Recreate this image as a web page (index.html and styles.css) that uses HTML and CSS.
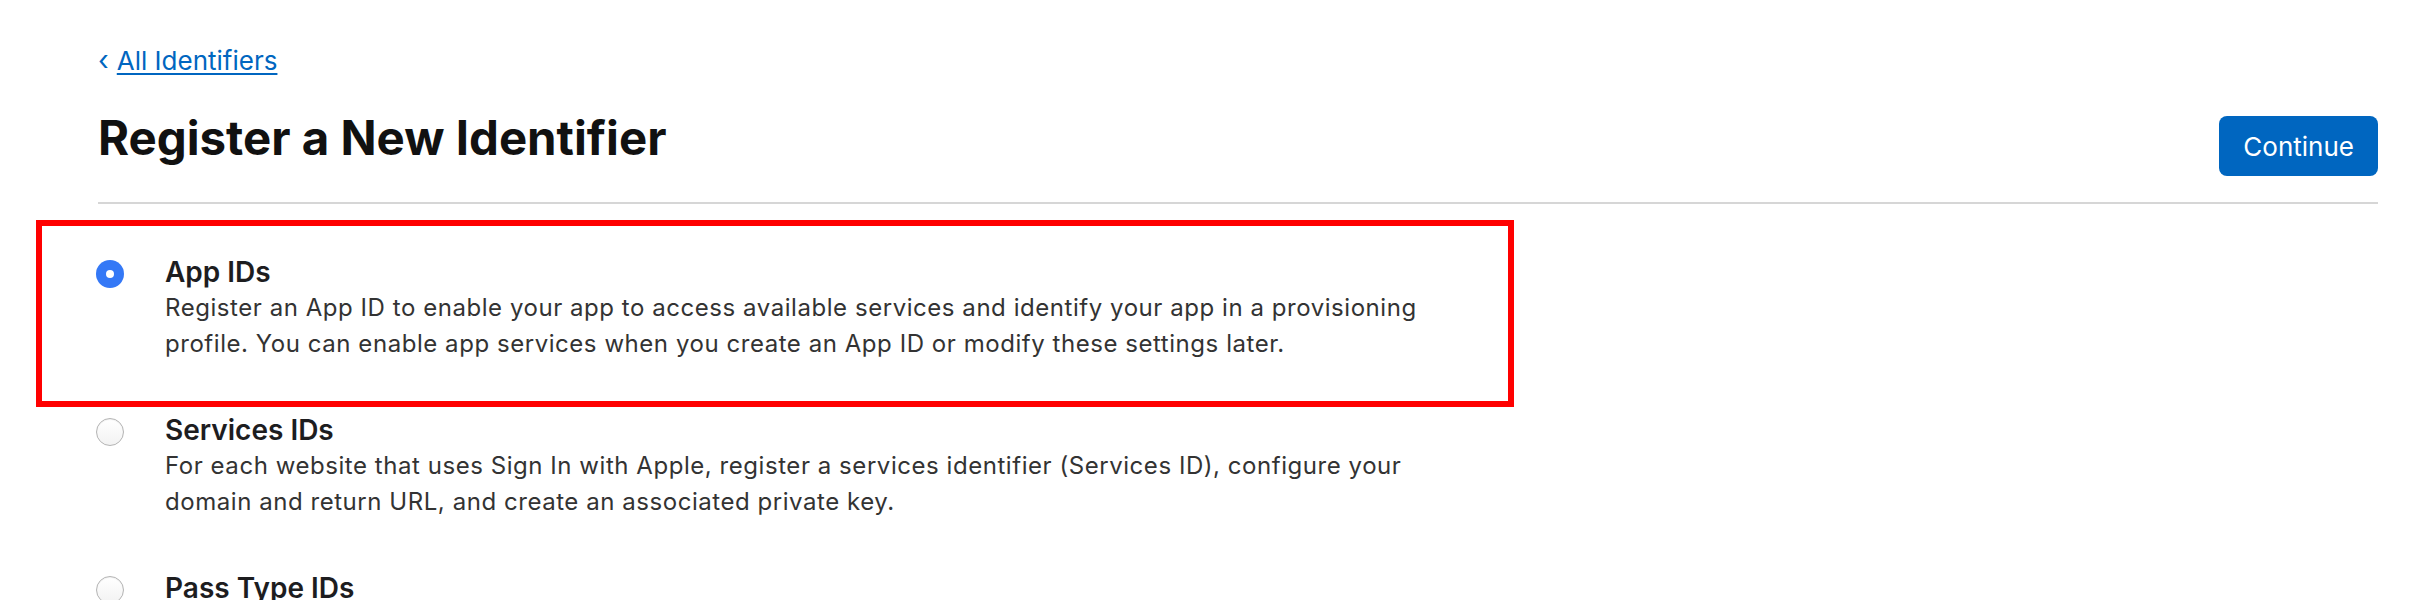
FILE: index.html
```html
<!DOCTYPE html>
<html lang="en">
<head>
<meta charset="utf-8">
<title>Register a New Identifier</title>
<link rel="stylesheet" href="styles.css">
</head>
<body>
<main class="page">
  <nav class="crumbs">
    <span class="chev">&#8249;</span>
    <a class="back" href="#">All Identifiers</a>
  </nav>
  <header class="head">
    <h1 class="title">Register a New Identifier</h1>
    <button class="btn" type="button">Continue</button>
  </header>
  <ul class="options">
    <li class="option">
      <span class="radio radio-on"></span>
      <div class="opt-body">
        <h2 class="opt-title">App IDs</h2>
        <p class="opt-desc">Register an App ID to enable your app to access available services and identify your app in a provisioning profile. You can enable app services when you create an App ID or modify these settings later.</p>
      </div>
      <span class="mark"></span>
    </li>
    <li class="option">
      <span class="radio"></span>
      <div class="opt-body">
        <h2 class="opt-title">Services IDs</h2>
        <p class="opt-desc">For each website that uses Sign In with Apple, register a services identifier (Services ID), configure your domain and return URL, and create an associated private key.</p>
      </div>
    </li>
    <li class="option">
      <span class="radio"></span>
      <div class="opt-body">
        <h2 class="opt-title">Pass Type IDs</h2>
      </div>
    </li>
  </ul>
</main>
</body>
</html>
```

FILE: styles.css
```css
* { box-sizing: border-box; }
html, body { margin: 0; padding: 0; background: #fff; }
body {
  font-family: Inter, "Noto Sans", "Liberation Sans", sans-serif;
  color: #1d1d1f;
  overflow: hidden;
  height: 600px;
}
.page {
  padding: 45px 52px 0 98px;
}
.crumbs {
  display: flex;
  align-items: baseline;
  gap: 8px;
  font-size: 26px;
  line-height: 31px;
  color: #0066c0;
}
.chev { font-size: 28px; margin-left: 0; }
.back {
  color: #0066c0;
  text-decoration: underline;
  text-decoration-thickness: 2px;
  text-underline-offset: 3px;
}
.head {
  display: flex;
  justify-content: space-between;
  align-items: flex-start;
  margin-top: 33px;
  padding-bottom: 26px;
  border-bottom: 2px solid #d6d6d6;
}
.title {
  margin: 0;
  font-size: 47.4px;
  line-height: 58px;
  font-weight: 700;
  color: #111;
}
.btn {
  margin-top: 7px;
  height: 60px;
  padding: 0 24px;
  border: 0;
  border-radius: 8px;
  background: #0066c0;
  color: #fff;
  font-family: inherit;
  font-size: 26px;
}
.options {
  list-style: none;
  margin: 0;
  padding: 50px 0 0 0;
  display: flex;
  flex-direction: column;
  gap: 50px;
}
.option {
  position: relative;
  display: flex;
  align-items: flex-start;
  gap: 41px;
}
.radio {
  flex: none;
  width: 28px;
  height: 28px;
  margin: 6px 0 0 -2px;
  border-radius: 50%;
  border: 1px solid #b4b4b4;
  background: linear-gradient(#ffffff, #f2f2f2);
  box-shadow: inset 0 1px 1px rgba(0,0,0,0.06);
}
.radio-on {
  border: 0;
  background: #3478f6;
  box-shadow: none;
  position: relative;
}
.radio-on::after {
  content: "";
  position: absolute;
  left: 10px;
  top: 10px;
  width: 8px;
  height: 8px;
  border-radius: 50%;
  background: #fff;
}
.opt-body { width: 1300px; }
.opt-title {
  margin: 0;
  font-size: 28px;
  line-height: 36px;
  font-weight: 600;
  color: #1d1d1f;
}
.opt-desc {
  margin: 0;
  font-size: 24px;
  line-height: 36px;
  letter-spacing: 0.55px;
  color: #333;
}
.mark {
  position: absolute;
  top: -34px;
  left: -62px;
  width: 1478px;
  height: 187px;
  border: 6px solid #ff0000;
  pointer-events: none;
}
```
